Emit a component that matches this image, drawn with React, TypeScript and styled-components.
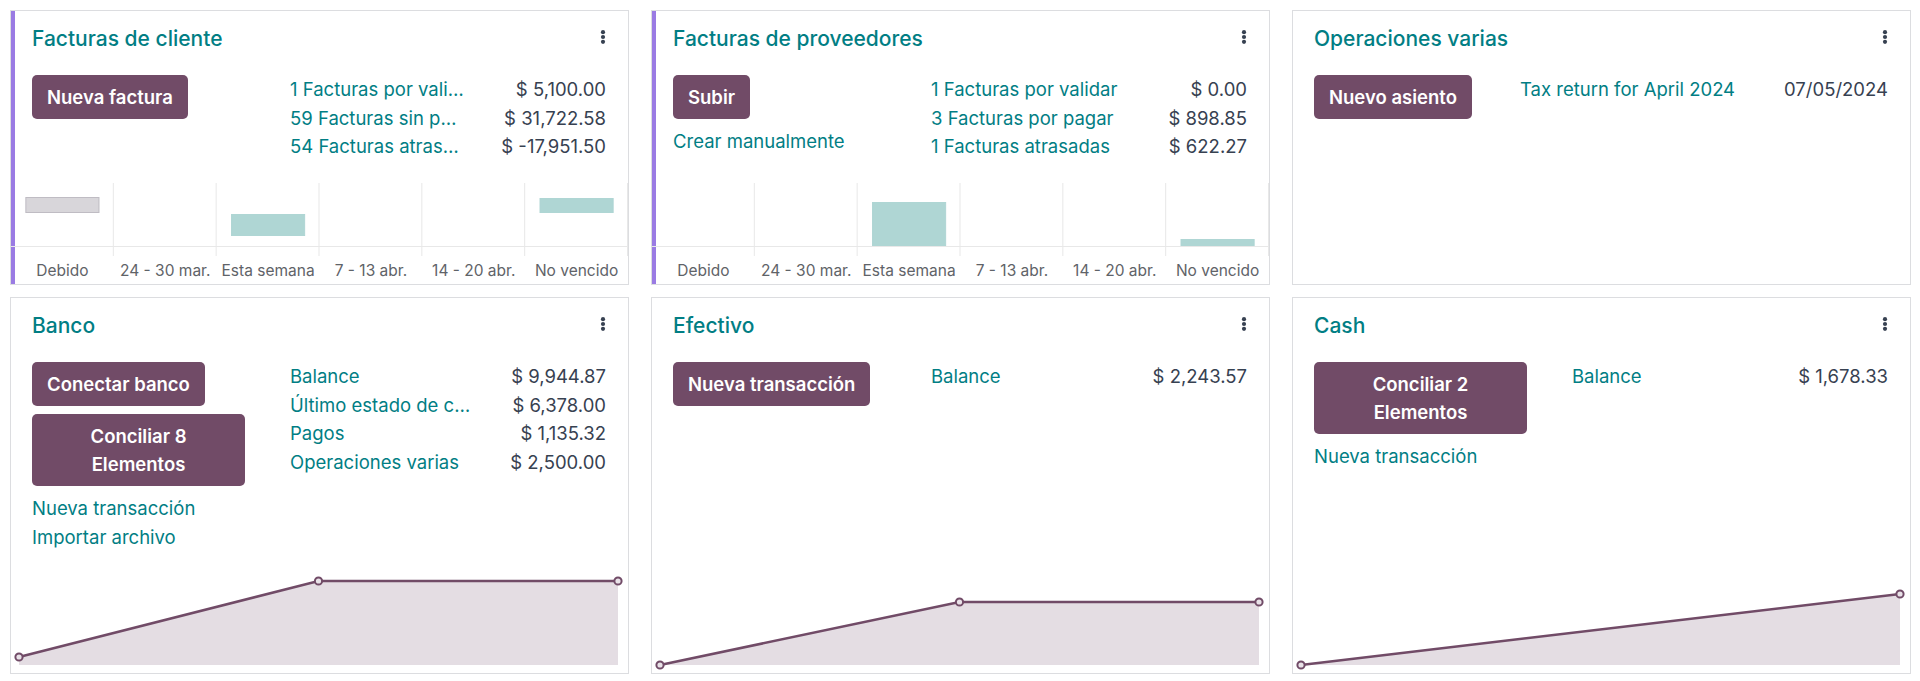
import React from 'react';
import styled, { createGlobalStyle } from 'styled-components';

/* ---------------------------------------------------------------------- */

const TEAL = '#017e84';
const PLUM = '#714b67';
const INK = '#374151';

type Bar = { col: number; y: number; h: number; past?: boolean };
type ChartSpec =
  | { kind: 'bar'; bars: Bar[] }
  | { kind: 'line'; points: number[] };

type Journal = {
  title: string;
  accent?: boolean;
  left: number;
  buttons: string[];
  links: string[];
  rows: [string, string][];
  chart?: ChartSpec;
};

const WEEKS = ['Debido', '24 - 30 mar.', 'Esta semana', '7 - 13 abr.', '14 - 20 abr.', 'No vencido'];

const journals: Journal[] = [
  {
    title: 'Facturas de cliente',
    accent: true,
    left: 213,
    buttons: ['Nueva factura'],
    links: [],
    rows: [
      ['1 Facturas por validar', '$ 5,100.00'],
      ['59 Facturas sin pagar', '$ 31,722.58'],
      ['54 Facturas atrasadas', '$ -17,951.50'],
    ],
    chart: {
      kind: 'bar',
      bars: [
        { col: 0, y: 14, h: 16, past: true },
        { col: 2, y: 31, h: 22 },
        { col: 5, y: 15, h: 15 },
      ],
    },
  },
  {
    title: 'Facturas de proveedores',
    accent: true,
    left: 213,
    buttons: ['Subir'],
    links: ['Crear manualmente'],
    rows: [
      ['1 Facturas por validar', '$ 0.00'],
      ['3 Facturas por pagar', '$ 898.85'],
      ['1 Facturas atrasadas', '$ 622.27'],
    ],
    chart: {
      kind: 'bar',
      bars: [
        { col: 2, y: 19, h: 44 },
        { col: 5, y: 56, h: 7 },
      ],
    },
  },
  {
    title: 'Operaciones varias',
    left: 161,
    buttons: ['Nuevo asiento'],
    links: [],
    rows: [['Tax return for April 2024', '07/05/2024']],
  },
  {
    title: 'Banco',
    left: 213,
    buttons: ['Conectar banco', 'Conciliar 8 Elementos'],
    links: ['Nueva transacción', 'Importar archivo'],
    rows: [
      ['Balance', '$ 9,944.87'],
      ['Último estado de cuenta', '$ 6,378.00'],
      ['Pagos', '$ 1,135.32'],
      ['Operaciones varias', '$ 2,500.00'],
    ],
    chart: { kind: 'line', points: [96, 20, 20] },
  },
  {
    title: 'Efectivo',
    left: 213,
    buttons: ['Nueva transacción'],
    links: [],
    rows: [['Balance', '$ 2,243.57']],
    chart: { kind: 'line', points: [104, 41, 41] },
  },
  {
    title: 'Cash',
    left: 213,
    buttons: ['Conciliar 2 Elementos'],
    links: ['Nueva transacción'],
    rows: [['Balance', '$ 1,678.33']],
    chart: { kind: 'line', points: [104, 33] },
  },
];

/* ---------------------------------------------------------------------- */

function Kebab() {
  return (
    <KebabIcon width="6" height="14" viewBox="0 0 6 14">
      <circle cx="3" cy="2.2" r="2.1" />
      <circle cx="3" cy="7" r="2.1" />
      <circle cx="3" cy="11.8" r="2.1" />
    </KebabIcon>
  );
}

function BarChart({ bars }: { bars: Bar[] }) {
  const colW = 616 / 6;
  return (
    <ChartBox>
      <svg width="100%" height="73" viewBox="0 0 616 73" preserveAspectRatio="none">
        {WEEKS.map((_, i) => (
          <line key={i} x1={(i + 1) * colW - 0.5} x2={(i + 1) * colW - 0.5} y1="0" y2="73" stroke="#e8e8e8" />
        ))}
        <line x1="0" x2="616" y1="63.5" y2="63.5" stroke="#e8e8e8" />
        {bars.map((b) => (
          <rect
            key={b.col}
            x={b.col * colW + colW / 2 - 37 + 0.5}
            y={b.y + 0.5}
            width="73"
            height={b.h - 1}
            fill={b.past ? '#d8d6da' : '#afd6d4'}
            stroke={b.past ? '#bfbcc3' : '#afd6d4'}
          />
        ))}
      </svg>
      <WeekRow>
        {WEEKS.map((w) => (
          <WeekLabel key={w}>{w}</WeekLabel>
        ))}
      </WeekRow>
    </ChartBox>
  );
}

function LineChart({ points }: { points: number[] }) {
  const step = 599 / (points.length - 1);
  const xy = points.map((y, i) => [8 + i * step, y]);
  const line = xy.map(([x, y]) => `${x},${y}`).join(' ');
  const area = `8,104 ${line} ${xy[xy.length - 1][0]},104`;
  return (
    <ChartBox>
      <svg width="100%" height="110" viewBox="0 0 617 110" preserveAspectRatio="none">
        <polygon points={area} fill="#e4dde3" />
        <polyline points={line} fill="none" stroke={PLUM} strokeWidth="2.5" />
        {xy.map(([x, y]) => (
          <circle key={x} cx={x} cy={y} r="3.6" fill="#e9e2e8" stroke={PLUM} strokeWidth="2" />
        ))}
      </svg>
    </ChartBox>
  );
}

function JournalCard({ j }: { j: Journal }) {
  return (
    <Card $accent={j.accent}>
      <Header>
        <Title>{j.title}</Title>
        <Kebab />
      </Header>

      <Body $left={j.left}>
        <Actions>
          {j.buttons.map((b) => (
            <Button key={b}>{b}</Button>
          ))}
          {j.links.length > 0 && (
            <Links>
              {j.links.map((l) => (
                <Link key={l}>{l}</Link>
              ))}
            </Links>
          )}
        </Actions>

        <Stats>
          {j.rows.map(([label, value]) => (
            <React.Fragment key={label}>
              <StatLabel>{label}</StatLabel>
              <StatValue>{value}</StatValue>
            </React.Fragment>
          ))}
        </Stats>
      </Body>

      {j.chart?.kind === 'bar' && <BarChart bars={j.chart.bars} />}
      {j.chart?.kind === 'line' && <LineChart points={j.chart.points} />}
    </Card>
  );
}

export default function App() {
  return (
    <>
      <GlobalStyle />
      <Dashboard>
        {journals.map((j) => (
          <JournalCard key={j.title} j={j} />
        ))}
      </Dashboard>
    </>
  );
}

/* ---------------------------------------------------------------------- */

const GlobalStyle = createGlobalStyle`
  body {
    margin: 0;
    background: #fff;
    color: ${INK};
    font-family: Inter, "Noto Sans", sans-serif;
  }
`;

const Dashboard = styled.div`
  display: grid;
  grid-template-columns: repeat(3, minmax(0, 1fr));
  grid-template-rows: 275px 377px;
  column-gap: 22px;
  row-gap: 12px;
  padding: 10px 9px 0 10px;
`;

const Card = styled.div<{ $accent?: boolean }>`
  display: flex;
  flex-direction: column;
  min-width: 0;
  border: 1px solid #dcdde0;
  background: #fff;
  box-shadow: ${(p) => (p.$accent ? 'inset 4px 0 0 #9a7be3' : 'none')};
  overflow: hidden;
`;

const Header = styled.div`
  display: flex;
  align-items: flex-start;
  justify-content: space-between;
  padding: 15px 22px 24px 21px;
`;

const Title = styled.div`
  font-size: 21px;
  line-height: 25px;
  font-weight: 500;
  color: ${TEAL};
`;

const KebabIcon = styled.svg`
  margin-top: 4px;
  fill: ${INK};
`;

const Body = styled.div<{ $left: number }>`
  display: grid;
  grid-template-columns: ${(p) => p.$left}px minmax(0, 1fr);
  column-gap: 45px;
  align-items: start;
  padding: 0 22px 0 21px;
  font-size: 18.5px;
  line-height: 28.5px;
`;

const Actions = styled.div`
  display: flex;
  flex-direction: column;
  align-items: flex-start;
  gap: 8px;
`;

const Button = styled.button`
  max-width: 100%;
  padding: 8px 15px;
  border: none;
  border-radius: 5px;
  background: ${PLUM};
  color: #fff;
  font-family: inherit;
  font-size: 18.5px;
  line-height: 28px;
  font-weight: 600;
  text-align: center;
`;

const Links = styled.div`
  display: flex;
  flex-direction: column;
`;

const Link = styled.a`
  color: ${TEAL};
  text-decoration: none;
`;

const Stats = styled.div`
  display: grid;
  grid-template-columns: minmax(0, 1fr) auto;
  column-gap: 37px;
`;

const StatLabel = styled.div`
  color: ${TEAL};
  white-space: nowrap;
  overflow: hidden;
  text-overflow: ellipsis;
`;

const StatValue = styled.div`
  text-align: right;
  white-space: nowrap;
`;

const ChartBox = styled.div`
  margin-top: auto;
  & > svg {
    display: block;
  }
  & > svg:only-child {
    margin-bottom: 2px;
  }
`;

const WeekRow = styled.div`
  display: grid;
  grid-template-columns: repeat(6, 1fr);
  height: 28px;
  align-items: center;
`;

const WeekLabel = styled.div`
  text-align: center;
  font-size: 15.5px;
  color: #5f6368;
  white-space: nowrap;
`;
